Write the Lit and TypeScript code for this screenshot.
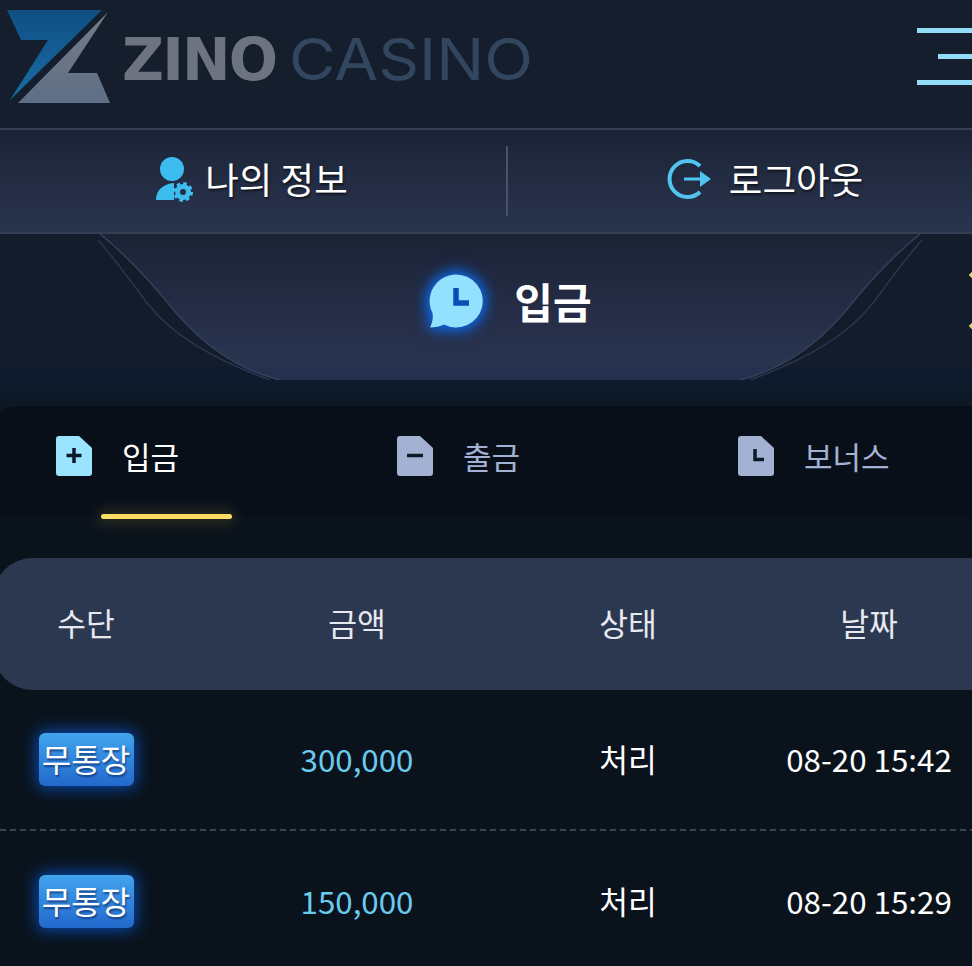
import { LitElement, html, css } from "lit";
import { customElement } from "lit/decorators.js";

const rows = [
  { amount: "300,000", date: "08-20 15:42" },
  { amount: "150,000", date: "08-20 15:29" },
];

@customElement("app-root")
export class AppRoot extends LitElement {
  static styles = css`
    :host {
      display: block;
      width: 972px;
      height: 966px;
      overflow: hidden;
      background: #0a131c;
      font-family: "Noto Sans CJK KR", "Noto Sans", sans-serif;
      color: #fff;
    }
    .page { width: 1024px; }
    .top {
      height: 128px;
      background: #141e2d;
      display: flex;
      align-items: center;
      justify-content: space-between;
      padding: 0 52px 0 7px;
    }
    .logo { display: flex; align-items: center; gap: 11px; height: 128px; }
    .mark { width: 104px; height: 96px; display: block; flex: none; margin-top: -12px; }
    .wordmark {
      display: flex;
      gap: 13px;
      line-height: 60px;
      margin-top: -12px;
    }
    .zino {
      color: #6d7381;
      font-family: "DejaVu Sans", sans-serif;
      font-weight: 700;
      font-size: 58px;
      letter-spacing: -1.8px;
      margin-top: 3px;
    }
    .casino {
      color: #33465f;
      font-family: Inter, sans-serif;
      font-weight: 400;
      font-size: 58px;
      margin-top: 2px;
      display: inline-block;
      transform: scaleX(1.098);
      transform-origin: left center;
    }
    .burger { width: 55px; display: flex; flex-direction: column; align-items: flex-end; gap: 21px; margin-top: -16px; }
    .burger i { display: block; height: 5px; width: 55px; background: #93dcf8; }
    .burger i:nth-child(2) { width: 34px; }
    .nav {
      height: 102px;
      border-top: 2px solid #343e55;
      border-bottom: 2px solid #343e55;
      background: linear-gradient(#1b2436, #2a344e);
      display: grid;
      grid-template-columns: 508px 1fr;
      align-items: center;
    }
    .nav-item {
      height: 70px;
      display: flex;
      align-items: center;
      justify-content: center;
      font-size: 36.5px;
      text-shadow: 1px 2px 2px rgba(0, 0, 0, 0.55);
    }
    .nav-item.first { border-right: 2px solid #48526a; gap: 10px; padding-right: 3px; }
    .nav-item.second { gap: 17px; padding-right: 3px; }
    .nav-item span { line-height: 66px; margin-top: -4px; }
    .nav-icon { margin-top: -4px; }
    .hero {
      position: relative;
      height: 146px;
      background: linear-gradient(#131c2b 133px, #0f1b2d 133px);
      display: flex;
      align-items: center;
      justify-content: center;
      gap: 29px;
      padding-right: 3px;
      padding-bottom: 12px;
      box-sizing: border-box;
    }
    .hero-bg { position: absolute; left: 0; top: 0; width: 1024px; height: 146px; }
    .hero-icon { position: relative; width: 56px; height: 56px; filter: drop-shadow(0 0 7px #0f6cf0) drop-shadow(0 0 7px #0b58c8); }
    .hero-title {
      position: relative;
      font-size: 42px;
      font-weight: 700;
      line-height: 60px;
    }
    .spark { position: absolute; left: 970px; width: 6px; height: 6px; background: #e8d77a; transform: rotate(45deg); }
    .spark.a { top: 38px; }
    .spark.b { top: 89px; }
    .main {
      background: linear-gradient(#0f1b2d, #0a131c 60px);
      padding-top: 26px;
    }
    .tabs {
      height: 112px;
      background: #080f19;
      border-radius: 24px;
      margin-left: -6px;
      padding-left: 6px;
      display: grid;
      grid-template-columns: repeat(3, 341px);
      position: relative;
    }
    .tab {
      display: flex;
      align-items: center;
      gap: 30px;
      padding: 0 0 12px 56px;
      font-size: 31px;
      color: #a3b1d3;
    }
    .tab.active { color: #fff; }
    .tab svg { width: 36px; height: 40px; flex: none; }
    .tab span { line-height: 40px; }
    .underline {
      position: absolute;
      left: 107px;
      top: 108px;
      width: 131px;
      height: 5px;
      border-radius: 3px;
      background: #fbdd66;
      box-shadow: 0 0 14px 4px rgba(250, 210, 80, 0.16);
    }
    .table-wrap { padding-top: 40px; }
    .row {
      display: grid;
      grid-template-columns: 172px 370px 172px 310px;
      align-items: center;
      justify-items: center;
      font-size: 31.3px;
    }
    .head {
      height: 132px;
      background: #2c3750;
      border-radius: 38px;
      margin-left: -6px;
      padding: 0 0 4px 6px;
      box-sizing: border-box;
      color: #e6e9f0;
    }
    .body-row {
      height: 141px;
      padding-bottom: 2px;
      box-sizing: border-box;
      background: repeating-linear-gradient(90deg, #36424f 0 6px, transparent 6px 10px) bottom / 100% 2px no-repeat;
    }
    .body-row:last-child { height: 140px; padding-bottom: 0; background: none; }
    .cell { margin-top: -2px; }
    .badge {
      display: block;
      width: 95px;
      height: 53px;
      line-height: 50px;
      font-size: 32px;
      text-align: center;
      border-radius: 6px;
      background: linear-gradient(#42a4ee, #2268cc);
      box-shadow: 0 0 16px 2px rgba(10, 100, 245, 0.7);
      text-shadow: 1px 2px 2px rgba(10, 40, 100, 0.7);
    }
    .amount { color: #6acbef; }
  `;

  render() {
    const file = "M3 0H23L36 12V37a3 3 0 0 1-3 3H3a3 3 0 0 1-3-3V3a3 3 0 0 1 3-3Z";
    return html`<div class="page">
      <header class="top">
        <div class="logo">
          <svg class="mark" viewBox="0 0 104 96">
            <defs>
              <linearGradient id="lb" x1="0" y1="0" x2="0" y2="1">
                <stop offset="0" stop-color="#0f4f83" /><stop offset="1" stop-color="#186da8" />
              </linearGradient>
              <linearGradient id="lg" x1="0" y1="0" x2="0" y2="1">
                <stop offset="0" stop-color="#767b88" /><stop offset="1" stop-color="#5f6f85" />
              </linearGradient>
            </defs>
            <path d="M0 0H95L3 90L41 30H14Z" fill="url(#lb)" />
            <path d="M101 2L11 93H103L90 63H61Z" fill="url(#lg)" />
          </svg>
          <div class="wordmark"><span class="zino">ZINO</span><span class="casino">CASINO</span></div>
        </div>
        <div class="burger"><i></i><i></i><i></i></div>
      </header>

      <nav class="nav">
        <div class="nav-item first">
          <svg class="nav-icon" width="40" height="46" viewBox="0 0 40 46">
            <circle cx="17" cy="13" r="12" fill="#3dbcf0" />
            <path d="M1 44C1 34 8 28 19 27V44Z" fill="#3dbcf0" />
            <circle cx="28" cy="36" r="5.500" fill="none" stroke="#3dbcf0" stroke-width="5" />
            <circle cx="28" cy="36" r="8.500" fill="none" stroke="#3dbcf0" stroke-width="3" stroke-dasharray="3.500 3.180" />
          </svg>
          <span>나의 정보</span>
        </div>
        <div class="nav-item second">
          <svg class="nav-icon" width="46" height="42" viewBox="0 0 46 42">
            <path d="M34 8A18 18 0 1 0 34 34" fill="none" stroke="#52c4f0" stroke-width="4" />
            <path d="M18 19.500H34V13L45 21L34 29V22.500H18Z" fill="#52c4f0" />
          </svg>
          <span>로그아웃</span>
        </div>
      </nav>

      <section class="hero">
        <svg class="hero-bg" viewBox="0 0 1024 146">
          <defs>
            <linearGradient id="hg" x1="0" y1="0" x2="0" y2="1">
              <stop offset="0" stop-color="#1b2335" /><stop offset="0.7" stop-color="#28314b" /><stop offset="0.9" stop-color="#29344f" /><stop offset="0.91" stop-color="#25314f" /><stop offset="1" stop-color="#24304f" />
            </linearGradient>
          </defs>
          <path d="M100 0C130 24 150 48 163 63C190 98 225 132 280 146H740C795 132 830 98 857 63C870 48 890 24 920 0Z" fill="url(#hg)" />
          <path d="M100 0C130 24 150 48 163 63C190 98 225 132 280 146" fill="none" stroke="#33405a" stroke-width="1.500" />
          <path d="M98 6C115 25 130 46 147 69C170 98 205 122 270 146" fill="none" stroke="#2a3650" stroke-width="1.500" />
          <path d="M920 0C890 24 870 48 857 63C830 98 795 132 740 146" fill="none" stroke="#33405a" stroke-width="1.500" />
          <path d="M922 6C905 25 890 46 873 69C850 98 815 122 750 146" fill="none" stroke="#2a3650" stroke-width="1.500" />
        </svg>
        <i class="spark a"></i><i class="spark b"></i>
        <svg class="hero-icon" viewBox="0 0 56 56">
          <path d="M27 1.500A26.500 26.500 0 1 1 15 51.500C11 53.500 6 54.500 1 54.500C3 50 4.500 46 3.500 40A26.500 26.500 0 0 1 27 1.500Z" fill="#93e0ff" />
          <path d="M27 15V30H40" fill="none" stroke="#0b4db5" stroke-width="5.500" />
        </svg>
        <div class="hero-title">입금</div>
      </section>

      <main class="main">
        <div class="tabs">
          <div class="tab active">
            <svg viewBox="0 0 36 40"><path d="${file}" fill="#9be4ff" />
              <path d="M18 12V27M10.500 19.500H25.500" stroke="#0c1a28" stroke-width="3.500" fill="none" /></svg>
            <span>입금</span>
          </div>
          <div class="tab">
            <svg viewBox="0 0 36 40"><path d="${file}" fill="#a3b1d3" />
              <path d="M10 19.500H26" stroke="#0c1a28" stroke-width="3.500" fill="none" /></svg>
            <span>출금</span>
          </div>
          <div class="tab">
            <svg viewBox="0 0 36 40"><path d="${file}" fill="#a3b1d3" />
              <path d="M17 13V23.500H26" stroke="#0c1a28" stroke-width="3.500" fill="none" /></svg>
            <span>보너스</span>
          </div>
          <i class="underline"></i>
        </div>

        <div class="table-wrap">
          <div class="row head"><span>수단</span><span>금액</span><span>상태</span><span>날짜</span></div>
          ${rows.map(
            (r) => html`<div class="row body-row">
              <span class="badge">무통장</span>
              <span class="cell amount">${r.amount}</span>
              <span class="cell">처리</span>
              <span class="cell">${r.date}</span>
            </div>`
          )}
        </div>
      </main>
    </div>`;
  }
}
